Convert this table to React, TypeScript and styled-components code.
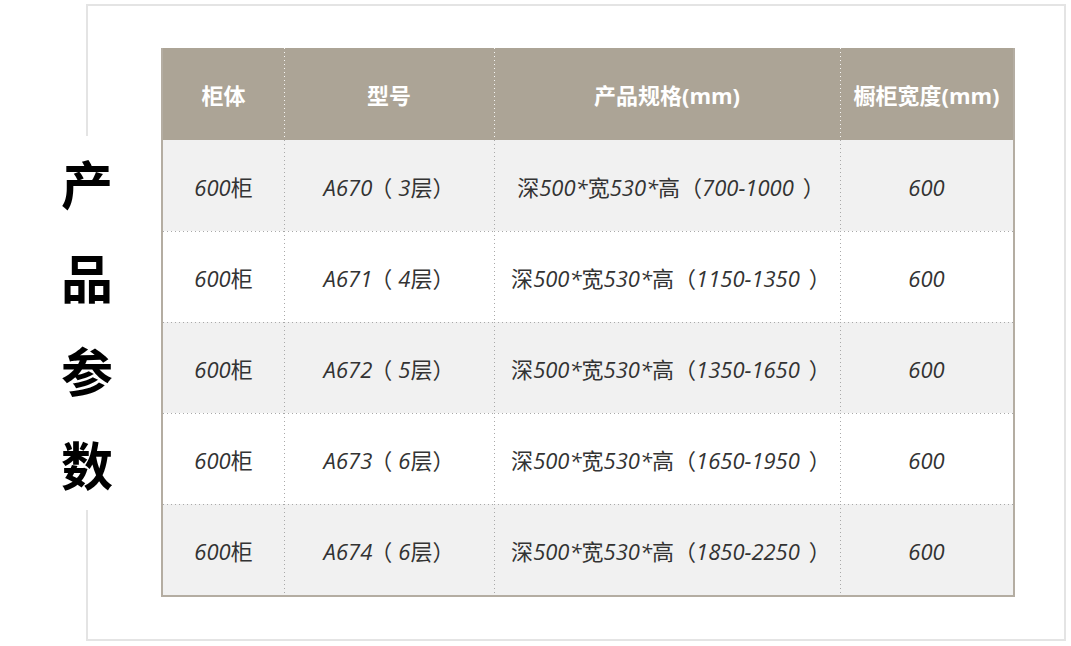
import * as React from 'react';
import styled, { createGlobalStyle } from 'styled-components';

const GlobalStyle = createGlobalStyle`
    html, body {
        margin: 0;
        padding: 0;
        background: #ffffff;
    }
`;

const COLORS = {
    frame: '#e4e4e4',
    header: '#aca496',
    tableEdge: '#b4ada2',
    stripe: '#f1f1f1',
    dots: '#a9a9a9',
    text: '#333333',
};

const CJK = '"Noto Sans CJK SC", sans-serif';
const LATIN = '"Open Sans", "Noto Sans CJK SC", sans-serif';

const Page = styled.div`
    width: 1071px;
    height: 646px;
    box-sizing: border-box;
    padding: 4px 0 0 86px;
    overflow: hidden;
`;

const Frame = styled.div`
    position: relative;
    width: 980px;
    height: 637px;
    box-sizing: border-box;
    border: 2px solid ${COLORS.frame};
    padding: 42px 0 0 73px;
`;

const SideLabel = styled.div`
    position: absolute;
    left: -27px;
    top: 130px;
    width: 52px;
    height: 374px;
    background: #ffffff;
    display: flex;
    flex-direction: column;
`;

const SideChar = styled.div`
    height: 93.5px;
    line-height: 93.5px;
    text-align: center;
    font-family: ${CJK};
    font-weight: 700;
    font-size: 52px;
    color: #000000;
`;

const Table = styled.div`
    width: 854px;
    box-sizing: border-box;
    border: 2px solid ${COLORS.tableEdge};
    border-top: none;
    display: grid;
    grid-template-columns: 121px 210px 346px 173px;
`;

const dotsDown = (color: string) =>
    `repeating-linear-gradient(to bottom, ${color} 0 1px, transparent 1px 4px) left top / 1px 100% no-repeat`;
const dotsAcross = (color: string) =>
    `repeating-linear-gradient(to right, ${color} 0 1px, transparent 1px 4px) left top / 100% 1px no-repeat`;

const HeadCell = styled.div<{ first?: boolean }>`
    height: 92px;
    display: flex;
    align-items: center;
    justify-content: center;
    font-family: ${LATIN};
    font-weight: 700;
    font-size: 22px;
    color: #ffffff;
    white-space: nowrap;
    background: ${({ first }) => (first ? '' : `${dotsDown('rgba(255,255,255,0.9)')},`)} ${COLORS.header};
`;

const Cell = styled.div<{ striped: boolean; first: boolean; topRow: boolean }>`
    height: 91px;
    display: flex;
    align-items: center;
    justify-content: center;
    font-family: ${CJK};
    font-size: 22px;
    color: ${COLORS.text};
    white-space: nowrap;
    text-spacing-trim: space-all;
    background: ${({ first }) => (first ? '' : `${dotsDown(COLORS.dots)},`)}
        ${({ topRow }) => (topRow ? '' : `${dotsAcross(COLORS.dots)},`)}
        ${({ striped }) => (striped ? COLORS.stripe : '#ffffff')};
`;

const Latin = styled.span`
    font-family: ${LATIN};
    font-style: italic;
`;

const Paren = styled.span<{ closing?: boolean }>`
    margin-left: ${({ closing }) => (closing ? '9px' : '-2px')};
    margin-right: ${({ closing }) => (closing ? '-8px' : '6px')};
`;

// numbers are set in italic, chinese characters stay upright
const Mixed = ({ text }: { text: string }) => {
    const parts = text.split(/([（）]|[\u3000-\u9fff\uff00-\uffef]+)/).filter(Boolean);
    return (
        <span>
            {parts.map((part, i) => {
                if (part === '（' || part === '）') {
                    return (
                        <Paren key={i} closing={part === '）'}>
                            {part}
                        </Paren>
                    );
                }
                return /[\u3000-\u9fff\uff00-\uffef]/.test(part) ? (
                    <span key={i}>{part}</span>
                ) : (
                    <Latin key={i}>{part}</Latin>
                );
            })}
        </span>
    );
};

const HEADERS = ['柜体', '型号', '产品规格(mm)', '橱柜宽度(mm)'];

const ROWS = [
    ['600柜', 'A670（3层）', '深500*宽530*高（700-1000）', '600'],
    ['600柜', 'A671（4层）', '深500*宽530*高（1150-1350）', '600'],
    ['600柜', 'A672（5层）', '深500*宽530*高（1350-1650）', '600'],
    ['600柜', 'A673（6层）', '深500*宽530*高（1650-1950）', '600'],
    ['600柜', 'A674（6层）', '深500*宽530*高（1850-2250）', '600'],
];

const App = (): JSX.Element => {
    return (
        <Page>
            <GlobalStyle />
            <Frame>
                <SideLabel>
                    {['产', '品', '参', '数'].map((ch) => (
                        <SideChar key={ch}>{ch}</SideChar>
                    ))}
                </SideLabel>

                <Table>
                    {HEADERS.map((title, i) => (
                        <HeadCell key={title} first={i === 0}>
                            {title}
                        </HeadCell>
                    ))}
                    {ROWS.map((row, r) =>
                        row.map((value, c) => (
                            <Cell key={`${r}-${c}`} striped={r % 2 === 0} first={c === 0} topRow={r === 0}>
                                <Mixed text={value} />
                            </Cell>
                        )),
                    )}
                </Table>
            </Frame>
        </Page>
    );
};

export default App;
